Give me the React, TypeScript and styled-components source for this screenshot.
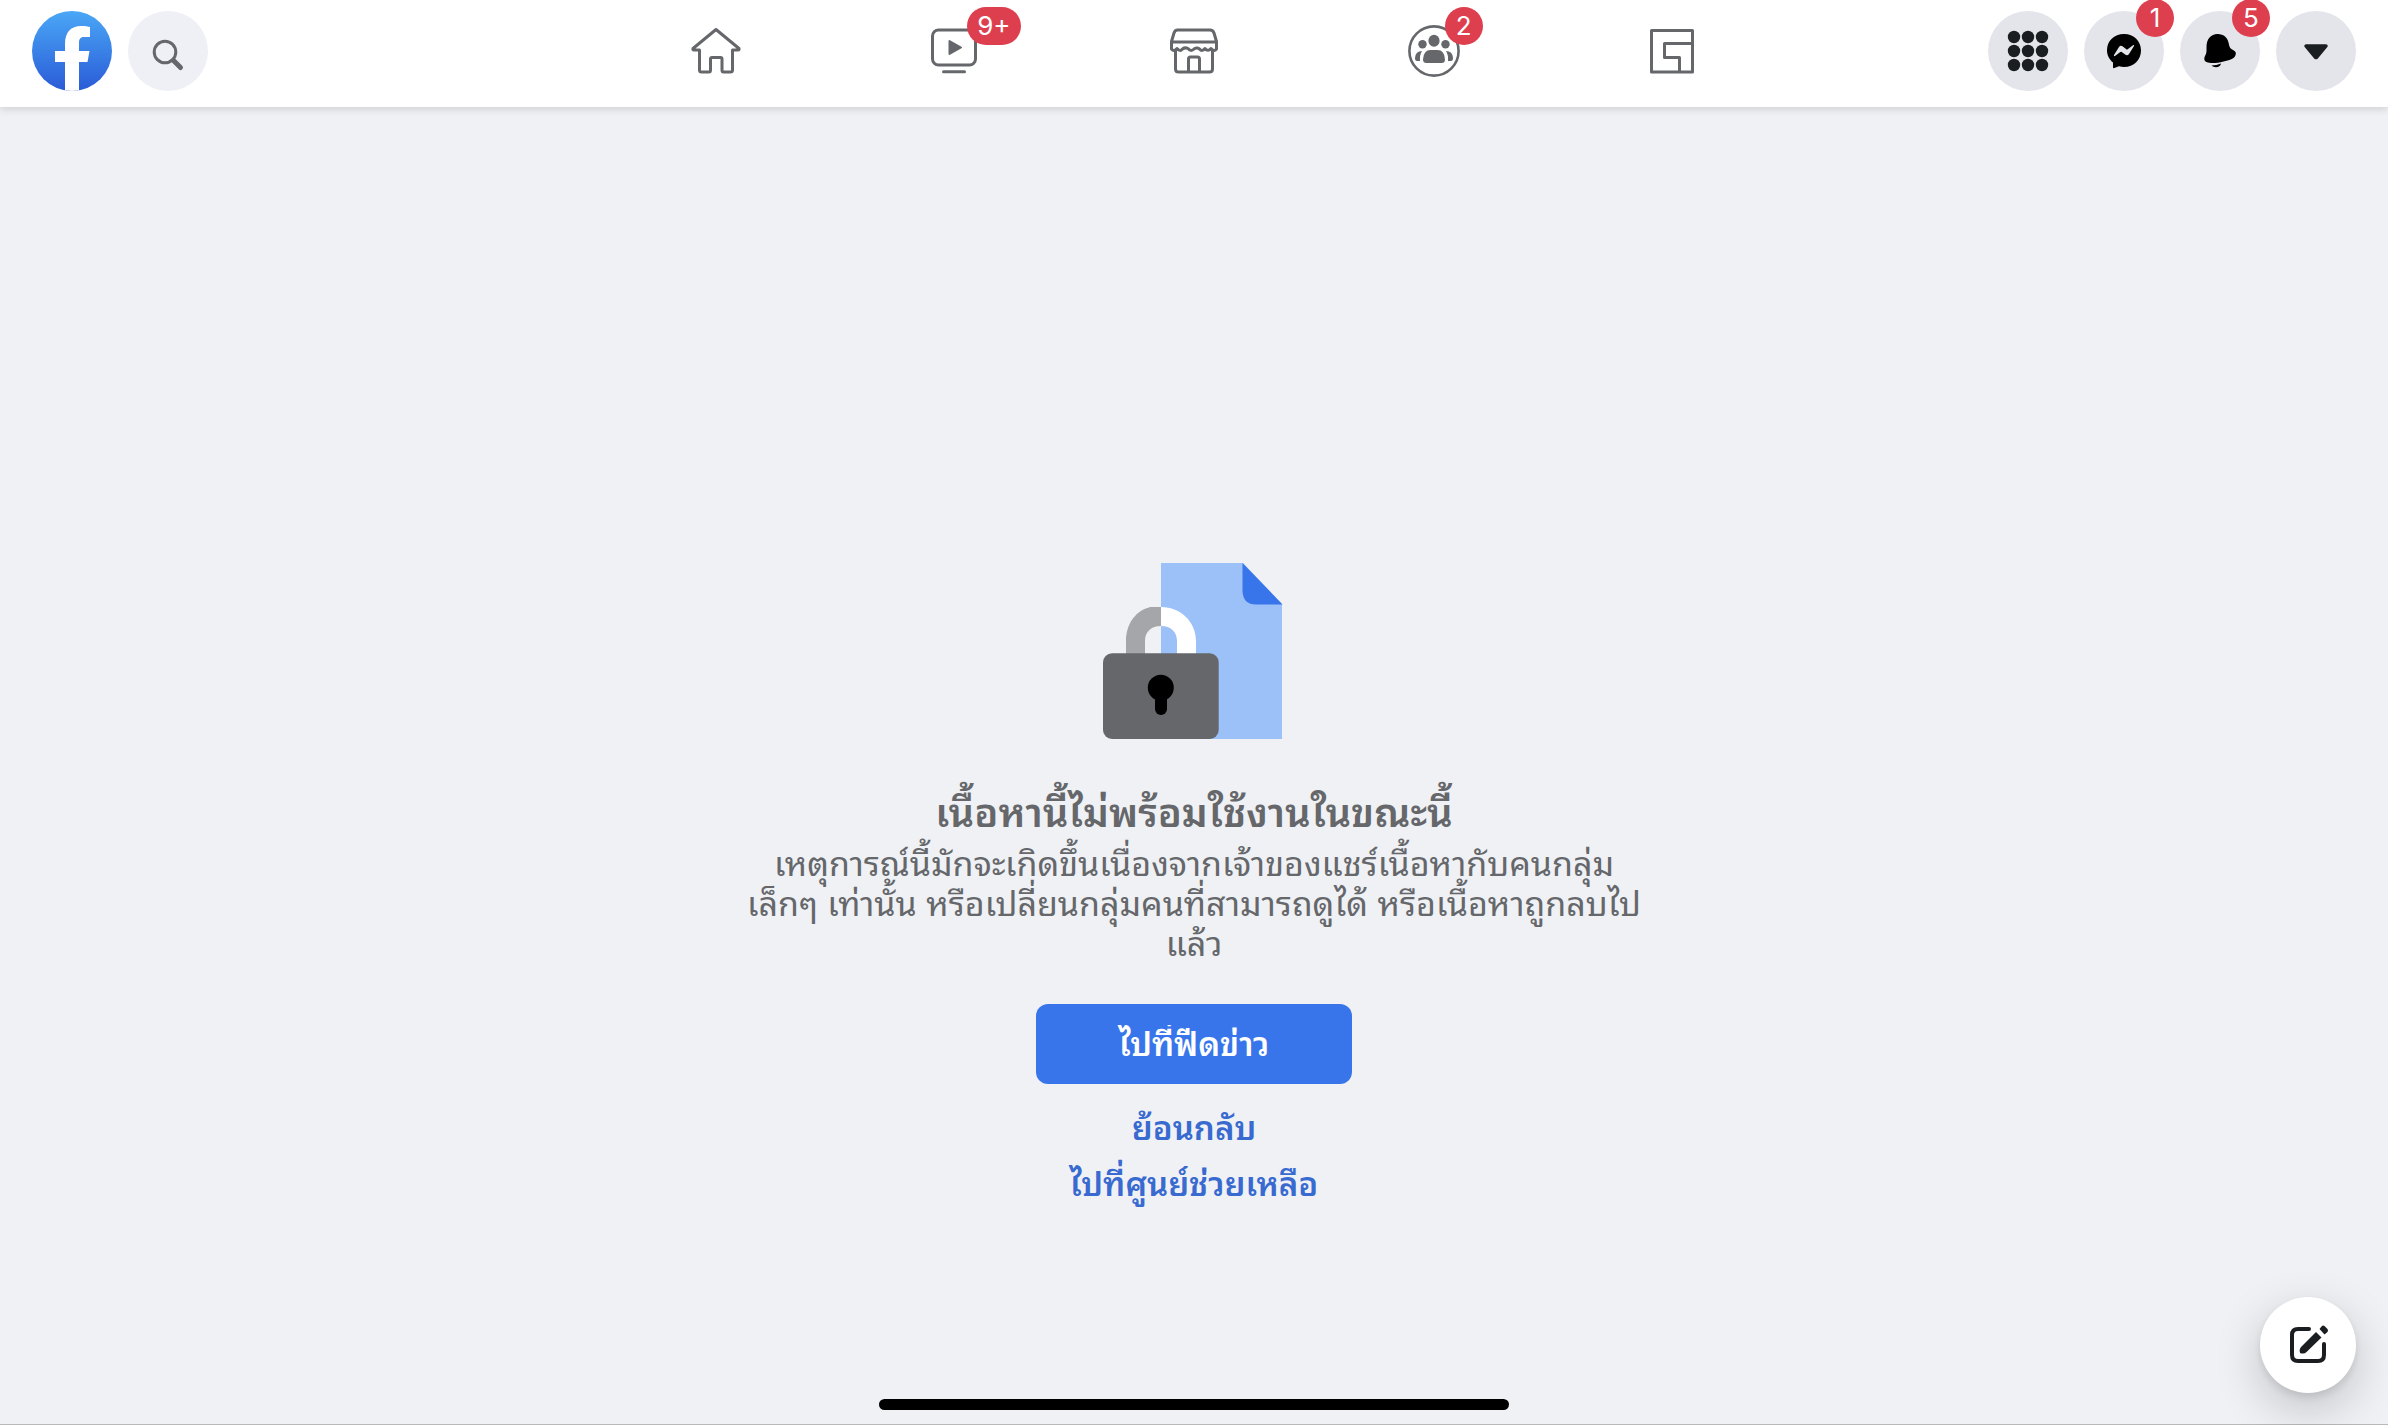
import React from 'react';
import styled, { createGlobalStyle } from 'styled-components';

const GlobalStyle = createGlobalStyle`
  *, *::before, *::after { box-sizing: border-box; }
  body {
    margin: 0;
    background: #eff1f5;
    font-family: Inter, Thonburi, "Noto Sans Thai Looped", Loma, Garuda, Waree, "Noto Sans Thai", "Noto Sans", sans-serif;
    color: #65676b;
  }
`;

const Page = styled.div`
  min-height: 100vh;
  display: flex;
  flex-direction: column;
  border-bottom: 1px solid #b9b9bc;
`;

const Header = styled.header`
  display: grid;
  grid-template-columns: minmax(0, 1fr) 50% minmax(0, 1fr);
  align-items: start;
  height: 107px;
  padding-top: 11px;
  background: #fff;
  box-shadow: 0 2px 8px rgba(0, 0, 0, 0.15);
`;

const Side = styled.div<{ $end?: boolean }>`
  display: flex;
  gap: 16px;
  padding: 0 32px;
  justify-content: ${(p) => (p.$end ? 'flex-end' : 'flex-start')};
`;

const LogoLink = styled.a`
  display: block;
  width: 80px;
  height: 80px;
`;

const RoundButton = styled.button<{ $tone?: string }>`
  position: relative;
  flex: none;
  width: 80px;
  height: 80px;
  padding: 0;
  border: 0;
  border-radius: 50%;
  background: ${(p) => p.$tone ?? '#e4e5ea'};
  cursor: pointer;

  svg { display: block; }
`;

const Nav = styled.nav`
  display: grid;
  grid-template-columns: repeat(5, 1fr);
`;

const NavLink = styled.a`
  display: flex;
  justify-content: center;
  color: #65676b;
`;

const NavIcon = styled.span`
  position: relative;
  width: 80px;
  height: 80px;

  svg { display: block; }
`;

const Badge = styled.span<{ $top: number }>`
  position: absolute;
  top: ${(p) => p.$top}px;
  left: 52px;
  min-width: 38px;
  height: 38px;
  padding: 0 10px;
  border-radius: 19px;
  background: #dd3f4f;
  color: #fff;
  font-family: Inter, sans-serif;
  font-size: 26px;
  line-height: 38px;
  text-align: center;
`;

const Main = styled.main`
  flex: 1;
  display: flex;
  flex-direction: column;
  align-items: center;
  padding: 456px 32px 120px;
  text-align: center;
`;

const Title = styled.h1`
  margin: 50px 0 0;
  font-size: 40px;
  line-height: 48px;
  font-weight: 600;
`;

const Message = styled.p`
  margin: 7px 0 0;
  font-size: 34px;
  line-height: 40px;
`;

const PrimaryButton = styled.button`
  width: 316px;
  height: 80px;
  margin-top: 40px;
  padding: 0;
  border: 0;
  border-radius: 12px;
  background: #3975ea;
  color: #fff;
  font: inherit;
  font-size: 33px;
  font-weight: 600;
  cursor: pointer;
`;

const ButtonLabel = styled.span`
  display: block;
  overflow: hidden;
  line-height: 38px;
`;

const TextLink = styled.a<{ $first?: boolean }>`
  margin-top: ${(p) => (p.$first ? 24 : 16)}px;
  color: #386ad0;
  font-size: 33px;
  line-height: 40px;
  font-weight: 600;
  text-decoration: none;
`;

const Compose = styled.button`
  position: fixed;
  right: 32px;
  bottom: 32px;
  width: 96px;
  height: 96px;
  padding: 0;
  border: 0;
  border-radius: 50%;
  background: #fff;
  box-shadow: 0 16px 48px rgba(0, 0, 0, 0.2), 0 4px 8px rgba(0, 0, 0, 0.1);
  cursor: pointer;

  svg { display: block; }
`;

const HomeIndicator = styled.div`
  position: fixed;
  bottom: 15px;
  left: 50%;
  width: 630px;
  height: 11px;
  margin-left: -315px;
  border-radius: 6px;
  background: #000;
`;

const Icon = ({ children, size = 80 }: { children: React.ReactNode; size?: number }) => (
  <svg width={size} height={size} viewBox={`0 0 ${size} ${size}`} fill="none" aria-hidden="true">
    {children}
  </svg>
);

const line = {
  stroke: '#65676b',
  strokeWidth: 3,
  strokeLinejoin: 'round' as const,
  strokeLinecap: 'round' as const,
};

const Logo = () => (
  <Icon>
    <defs>
      <linearGradient id="logoFill" x1="0" y1="0" x2="0" y2="1">
        <stop offset="0" stopColor="#4aa7f6" />
        <stop offset="1" stopColor="#2a5bd7" />
      </linearGradient>
      <clipPath id="logoClip"><circle cx="40" cy="40" r="40" /></clipPath>
    </defs>
    <circle cx="40" cy="40" r="40" fill="url(#logoFill)" />
    <path
      clipPath="url(#logoClip)"
      fill="#fff"
      d="M33 81V51H23V40H33V33C33 21 39 15 49 15C53 15 56 15.5 58 16V26H52C48 26 47 28.500 47 32V40H57.500L55.500 51H47V81Z"
    />
  </Icon>
);

const SearchIcon = () => (
  <Icon>
    <circle cx="37" cy="41" r="10.800" stroke="#65676b" strokeWidth="3" />
    <path d="M45.500 49.500L52.500 56.500" stroke="#65676b" strokeWidth="5" strokeLinecap="round" />
  </Icon>
);

const HomeIcon = () => (
  <Icon>
    <path
      {...line}
      d="M40 18.500L17 37.500Q16.500 39 18 39H23.500V59Q23.500 61 25.500 61H33Q34.500 61 34.500 59V48Q34.500 46.500 36 46.500H44.500Q46 46.500 46 48V59Q46 61 47.500 61H54.500Q56.500 61 56.500 59V39H62Q63.500 39 63 37.500Z"
    />
  </Icon>
);

const WatchIcon = () => (
  <Icon>
    <rect x="17.500" y="19" width="43" height="35" rx="6" {...line} />
    <path d="M34.500 30V43L46 36.500Z" fill="#65676b" stroke="#65676b" strokeWidth="2" strokeLinejoin="round" />
    <path d="M28.500 60.800H49.500" {...line} />
  </Icon>
);

const StoreIcon = () => (
  <Icon>
    <path
      {...line}
      d="M23.500 19H56Q59 19 60 22L62.500 30.500V38Q60 41 57 37.500Q54 41 51 37.500Q48 41 45.500 38Q43 36 40 38Q37 41 34 37.500Q31 36 28.500 38Q26 41 23 37.500Q20 41 17.500 38V30.500L20 22Q21 19 23.500 19ZM17.500 31H62.500M21.500 40V58Q21.500 61 24.500 61H55.500Q58.500 61 58.500 58V40M34.500 61V48Q34.500 46 36.500 46H43.500Q45.500 46 45.500 48V61"
    />
  </Icon>
);

const GroupsIcon = () => (
  <Icon>
    <g transform="translate(1 0)">
      <circle cx="40" cy="40" r="24.600" stroke="#65676b" strokeWidth="2.600" />
      <g fill="#65676b">
        <ellipse cx="40" cy="29.700" rx="5.600" ry="6" />
        <circle cx="28.500" cy="33.200" r="4.200" />
        <circle cx="51.500" cy="33.200" r="4.200" />
        <path d="M36.500 39H43.500Q50.500 39 51 48.500Q51 52 47.500 52H32.500Q29 52 29 48.500Q29.500 39 36.500 39Z" />
        <path d="M28 40Q25.500 44 26 50H23Q21 50 21 47Q21.500 40 28 40ZM52 40Q54.500 44 54 50H57Q59 50 59 47Q58.500 40 52 40Z" />
      </g>
    </g>
  </Icon>
);

const GamingIcon = () => (
  <Icon>
    <path {...line} d="M19.500 19.500H60.500V61H19.500ZM60.500 32.500H32.500V46.500H47.500V61" />
  </Icon>
);

const GridIcon = () => (
  <Icon>
    {[26, 40, 54].flatMap((y) =>
      [26, 40, 54].map((x) => <circle key={`${x}-${y}`} cx={x} cy={y} r="6.200" fill="#1b1e20" />),
    )}
  </Icon>
);

const MessengerIcon = () => (
  <Icon>
    <path
      fill="#000"
      d="M40 23C30 23 23 30.200 23 39.200C23 44.500 25.500 48.500 29 51.500V56.200Q29 57.500 30.300 57L35 55.200Q37.500 56 40 56C50 56 57 48.500 57 39.500C57 30.200 50 23 40 23Z"
    />
    <path
      fill="#e4e5ea"
      d="M30 44L35 36Q36.500 34 38.500 35.300L42.300 38.200Q43 38.600 43.700 38.200L49 34.200Q50.500 33.500 50 35L45 43Q43.500 45 41.500 43.800L37.700 40.900Q37 40.500 36.300 41L31 45Q29.500 45.500 30 44Z"
    />
  </Icon>
);

const BellIcon = () => (
  <Icon>
    <path
      fill="#000"
      d="M26.500 36C26.500 28 31 23 37.500 23C44 23 48 27 49 33.500C49.500 36.500 50.500 37.700 53 39C55.500 40.300 56.300 41.500 55.700 43.500C54.500 48.500 49 49 43.500 50.500C37 52 31 53 26.500 51C23.500 49.700 24 46.500 25.500 44C26.800 42 26.500 39 26.500 36ZM31.500 54.500Q36.500 54.500 41 52.500Q40 56.300 36 56.300Q33 56.300 31.500 54.500Z"
    />
  </Icon>
);

const CaretIcon = () => (
  <Icon>
    <path d="M30 35H50L40.500 46.500H39.500Z" fill="#1b1e20" stroke="#1b1e20" strokeWidth="3.500" strokeLinejoin="round" />
  </Icon>
);

const ComposeIcon = () => (
  <Icon size={96}>
    <path
      d="M49 32H38Q32 32 32 38V58Q32 64 38 64H58Q64 64 64 58V47"
      stroke="#1b1e20"
      strokeWidth="4"
      strokeLinecap="round"
    />
    <path
      fill="#1b1e20"
      d="M56 35L61.500 40.500L46.500 55Q45 56.500 43 56.500H41.500Q39.500 56.500 39.700 54.500V53Q39.700 51 41.500 49.500ZM59.500 32L61.500 29.500Q63 28 64.500 29L67.500 32Q68.500 33.500 67.500 35L64.500 37.500Z"
    />
  </Icon>
);

const LockedPage = () => (
  <svg width="182" height="176" viewBox="0 0 182 176" role="img" aria-label="locked">
    <path d="M58 0H140L179 41V176H58Z" fill="#9bc1f8" />
    <path d="M139.500 0V28Q140 41.500 153 41.500H179.500Z" fill="#3975ea" />
    <path d="M23 92V78C23 62 32 48 46 44.500L47 44H58V63C48 63 42 69 42 78V92Z" fill="#a5a6a9" />
    <path d="M58 44C78 44 93 59 93 78V92H74V78C74 69 68 63 58 63Z" fill="#fff" />
    <rect y="90.300" width="115.700" height="85.700" rx="9" fill="#65676b" />
    <circle cx="57.800" cy="124.700" r="13" fill="#000" />
    <rect x="52" y="128" width="12" height="24" rx="6" fill="#000" />
  </svg>
);

const navItems = [
  { label: 'Home', icon: <HomeIcon /> },
  { label: 'Watch', icon: <WatchIcon />, badge: '9+' },
  { label: 'Marketplace', icon: <StoreIcon /> },
  { label: 'Groups', icon: <GroupsIcon />, badge: '2' },
  { label: 'Gaming', icon: <GamingIcon /> },
];

const actions = [
  { label: 'Menu', icon: <GridIcon /> },
  { label: 'Messenger', icon: <MessengerIcon />, badge: '1' },
  { label: 'Notifications', icon: <BellIcon />, badge: '5' },
  { label: 'Account', icon: <CaretIcon /> },
];

export default function App() {
  return (
    <Page>
      <GlobalStyle />
      <Header>
        <Side>
          <LogoLink href="#" aria-label="Facebook"><Logo /></LogoLink>
          <RoundButton $tone="#eff0f5" aria-label="Search"><SearchIcon /></RoundButton>
        </Side>
        <Nav>
          {navItems.map((item) => (
            <NavLink key={item.label} href="#" aria-label={item.label}>
              <NavIcon>
                {item.icon}
                {item.badge && <Badge $top={-4}>{item.badge}</Badge>}
              </NavIcon>
            </NavLink>
          ))}
        </Nav>
        <Side $end>
          {actions.map((item) => (
            <RoundButton key={item.label} aria-label={item.label}>
              {item.icon}
              {item.badge && <Badge $top={-12}>{item.badge}</Badge>}
            </RoundButton>
          ))}
        </Side>
      </Header>
      <Main>
        <LockedPage />
        <Title>เนื้อหานี้ไม่พร้อมใช้งานในขณะนี้</Title>
        <Message>
          เหตุการณ์นี้มักจะเกิดขึ้นเนื่องจากเจ้าของแชร์เนื้อหากับคนกลุ่ม
          <br />
          เล็กๆ เท่านั้น หรือเปลี่ยนกลุ่มคนที่สามารถดูได้ หรือเนื้อหาถูกลบไป
          <br />
          แล้ว
        </Message>
        <PrimaryButton><ButtonLabel>ไปที่ฟีดข่าว</ButtonLabel></PrimaryButton>
        <TextLink href="#" $first>ย้อนกลับ</TextLink>
        <TextLink href="#">ไปที่ศูนย์ช่วยเหลือ</TextLink>
      </Main>
      <Compose aria-label="Compose"><ComposeIcon /></Compose>
      <HomeIndicator />
    </Page>
  );
}
